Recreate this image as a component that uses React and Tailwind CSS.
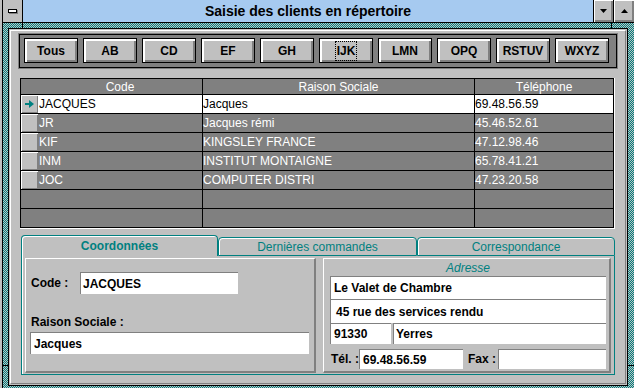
import React from 'react';

const letters = ['Tous', 'AB', 'CD', 'EF', 'GH', 'IJK', 'LMN', 'OPQ', 'RSTUV', 'WXYZ'];

const clients = [
    { code: 'JACQUES', raison: 'Jacques', tel: '69.48.56.59' },
    { code: 'JR', raison: 'Jacques rémi', tel: '45.46.52.61' },
    { code: 'KIF', raison: 'KINGSLEY FRANCE', tel: '47.12.98.46' },
    { code: 'INM', raison: 'INSTITUT MONTAIGNE', tel: '65.78.41.21' },
    { code: 'JOC', raison: 'COMPUTER DISTRI', tel: '47.23.20.58' },
];

const LetterButton = ({ label, focused }) => (
    <button className="w-[54px] h-[25px] border border-black bg-[#c0c0c0] shadow-[inset_2px_2px_0_#fff,inset_-2px_-2px_0_#808080] flex items-center justify-center text-[12px] font-bold text-black leading-none">
        {focused ? (
            <span className="border border-dotted border-black px-[1px] py-[3px]">{label}</span>
        ) : (
            label
        )}
    </button>
);

const GridRow = ({ client, selected }) => {
    if (!client) {
        return (
            <div className="flex h-[19px] border-b border-black">
                <div className="w-[181px]" />
                <div className="w-[272px] border-l border-black" />
                <div className="w-[139px] border-l border-black" />
            </div>
        );
    }
    const cell = selected ? 'bg-white text-black' : 'text-white';
    return (
        <div className="flex h-[19px] border-b border-black text-[12px]">
            <div className="w-[17px] bg-[#c0c0c0] shadow-[inset_1px_1px_0_#fff,inset_-1px_-1px_0_#808080] flex items-center justify-center">
                {selected && (
                    <svg width="9" height="8" viewBox="0 0 9 8">
                        <path d="M0 3h4V0l5 4-5 4V5H0z" fill="#008080" />
                    </svg>
                )}
            </div>
            <div className={`w-[164px] pl-[1px] flex items-center ${cell}`}>{client.code}</div>
            <div className={`w-[272px] border-l border-black flex items-center ${cell}`}>{client.raison}</div>
            <div className={`w-[139px] border-l border-black flex items-center ${cell}`}>{client.tel}</div>
        </div>
    );
};

const Field = ({ className, textClass, children }) => (
    <div className={`bg-white border-t border-l border-[#808080] flex items-center font-bold text-[12px] text-black ${className}`}>
        <span className={textClass}>{children}</span>
    </div>
);

const App = () => {
    const rows = [...clients, null, null];

    return (
        <div className="relative w-[634px] h-[388px] overflow-hidden bg-[#c0c0c0] pl-[2px] font-['Liberation_Sans',Arial,sans-serif] text-black">
            <div className="h-full border-l border-black flex flex-col">
                {/* title bar */}
                <div className="flex h-[23px] border-b border-black shrink-0">
                    <div className="w-[20px] border-r border-black flex items-center justify-center">
                        <div className="w-[9px] h-[4px] bg-white border border-black shadow-[1px_1px_0_#808080]" />
                    </div>
                    <div className="flex-1 bg-[#a6caf0] flex items-center justify-center text-[14px] font-bold">
                        Saisie des clients en répertoire
                    </div>
                    <div className="w-[20px] border-l border-black bg-[#c0c0c0] shadow-[inset_1px_1px_0_#fff,inset_-2px_-2px_0_#808080] flex items-center justify-center">
                        <svg width="7" height="4" viewBox="0 0 7 4"><path d="M0 0h7L3.5 4z" fill="#000" /></svg>
                    </div>
                    <div className="w-[21px] border-l border-black bg-[#c0c0c0] shadow-[inset_1px_1px_0_#fff,inset_-2px_-2px_0_#808080] flex items-center justify-center">
                        <svg width="7" height="4" viewBox="0 0 7 4"><path d="M0 4h7L3.5 0z" fill="#000" /></svg>
                    </div>
                </div>

                {/* frame */}
                <div className="flex-1 pt-[5px] pl-[5px] pr-[6px] bg-[image:repeating-conic-gradient(#008080_0_25%,#c0c0c0_0_50%)] bg-[length:2px_2px] bg-size-[2px_2px]">
                    <div className="w-[620px] h-[358px] border border-black bg-[#c0c0c0] p-[1px]">
                        <div className="h-full border-t border-l border-white border-r border-b border-r-[#808080] border-b-[#808080] flex flex-col">
                            {/* letter buttons */}
                            <div className="ml-[7px] mt-[2px] w-[600px] h-[36px] bg-[#808080] p-[1px]">
                                <div className="h-full border border-black pl-[4px] pt-[3px] flex gap-[5px]">
                                    {letters.map((l) => (
                                        <LetterButton key={l} label={l} focused={l === 'IJK'} />
                                    ))}
                                </div>
                            </div>

                            {/* grid */}
                            <div className="ml-[9px] mt-[9px] w-[595px] border-r border-b border-white">
                                <div className="w-[594px] border-t border-l border-r border-black bg-[#808080]">
                                    <div className="flex h-[16px] border-b border-black text-[12px] text-white leading-none">
                                        <div className="w-[17px]" />
                                        <div className="w-[164px] flex items-center justify-center">Code</div>
                                        <div className="w-[272px] border-l border-black flex items-center justify-center">Raison Sociale</div>
                                        <div className="w-[139px] border-l border-black flex items-center justify-center">Téléphone</div>
                                    </div>
                                    {rows.map((c, i) => (
                                        <GridRow key={i} client={c} selected={i === 0} />
                                    ))}
                                </div>
                            </div>

                            {/* tabs */}
                            <div className="ml-[10px] mt-[6px] w-[594px]">
                                <div className="flex items-end h-[21px] text-[12px] text-[#008080]">
                                    <div className="w-[197px] h-[21px] border-t border-l border-r border-[#008080] rounded-t-[4px] shadow-[inset_1px_1px_0_#fff] flex items-center justify-center font-bold">
                                        Coordonnées
                                    </div>
                                    <div className="w-[199px] h-[19px] border border-[#008080] rounded-t-[4px] shadow-[inset_1px_1px_0_#fff] flex items-center justify-center">
                                        Dernières commandes
                                    </div>
                                    <div className="flex-1 h-[19px] border border-[#008080] rounded-t-[4px] shadow-[inset_1px_1px_0_#fff] flex items-center justify-center">
                                        Correspondance
                                    </div>
                                </div>

                                <div className="h-[119px] border-l border-r border-b border-[#008080] shadow-[inset_1px_0_0_#fff] flex items-start pt-[2px] pl-[3px] pr-[3px] gap-[7px]">
                                    {/* left box */}
                                    <div className="w-[291px] h-[115px] border-t border-l border-white border-r-2 border-b-2 border-r-[#808080] border-b-[#808080] pl-[5px] pt-[13px] text-[12px] font-bold">
                                        <div className="flex items-center">
                                            <div className="w-[49px]">Code :</div>
                                            <Field className="w-[158px] h-[22px]" textClass="pl-[2px]">JACQUES</Field>
                                        </div>
                                        <div className="mt-[21px] leading-[14px]">Raison Sociale :</div>
                                        <Field className="-ml-[1px] mt-[3px] w-[279px] h-[22px]" textClass="pl-[3px]">Jacques</Field>
                                    </div>

                                    {/* right box */}
                                    <div className="w-[288px] h-[115px] border-t border-l border-white border-r-2 border-b-2 border-r-[#808080] border-b-[#808080] pl-[6px] pt-[1px] text-[12px]">
                                        <div className="w-[276px] h-[16px] leading-[16px] text-center italic text-[#008080]">Adresse</div>
                                        <Field className="w-[276px] h-[23px]" textClass="pl-[3px]">Le Valet de Chambre</Field>
                                        <Field className="w-[276px] h-[24px]" textClass="pl-[5px]">45 rue des services rendu</Field>
                                        <div className="flex gap-[2px]">
                                            <Field className="w-[61px] h-[21px]" textClass="pl-[3px]">91330</Field>
                                            <Field className="w-[213px] h-[21px]" textClass="pl-[2px]">Yerres</Field>
                                        </div>
                                        <div className="flex items-center mt-[5px] font-bold">
                                            <div className="w-[29px] pl-[1px]">Tél. :</div>
                                            <Field className="w-[104px] h-[20px]" textClass="pl-[3px]">69.48.56.59</Field>
                                            <div className="w-[35px] pl-[5px]">Fax :</div>
                                            <Field className="w-[108px] h-[20px]" textClass="" />
                                        </div>
                                    </div>
                                </div>
                            </div>
                        </div>
                    </div>
                </div>
            </div>

            {/* frame corner marks */}
            <div className="absolute left-[22px] top-[23px] w-px h-[5px] bg-black" />
            <div className="absolute left-[611px] top-[23px] w-px h-[5px] bg-black" />
            <div className="absolute left-[3px] top-[365px] w-[5px] h-px bg-black" />
            <div className="absolute left-[628px] top-[365px] w-[6px] h-px bg-black" />
        </div>
    );
};

export default App;
